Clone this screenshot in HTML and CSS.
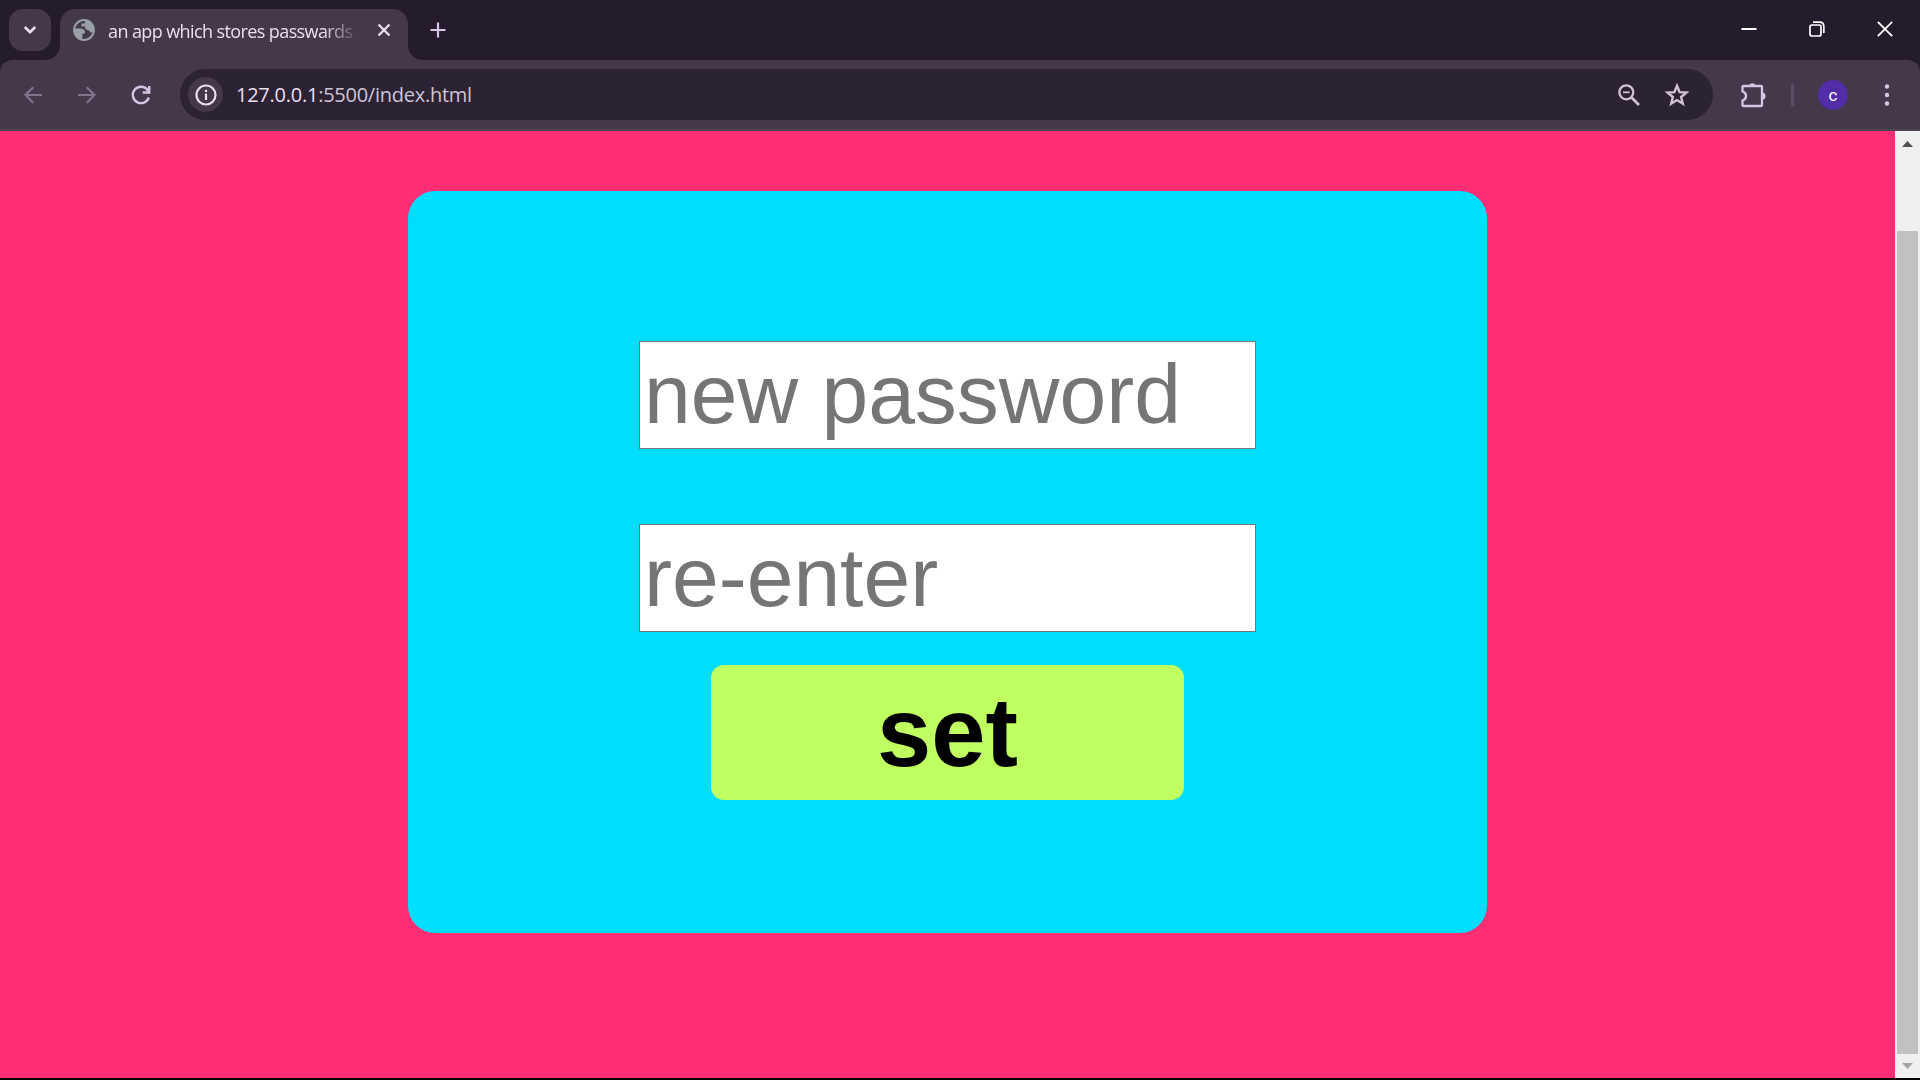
FILE: index.html
```html
<!DOCTYPE html>
<html lang="en">
<head>
<meta charset="utf-8">
<title>an app which stores passwards</title>
<link rel="stylesheet" href="styles.css">
</head>
<body>
<div class="window">
  <header class="tabstrip">
    <button class="tab-search" aria-label="Search tabs">
      <svg width="14" height="10" viewBox="0 0 14 10"><path d="M1.800 2l5.200 5.200 5.200-5.200" fill="none" stroke="#e9dff0" stroke-width="2.600"/></svg>
    </button>
    <div class="tab">
      <svg class="globe" width="22" height="22" viewBox="0 0 22 22">
        <circle cx="11" cy="11" r="9.900" fill="#43394b" stroke="#9aa0a6" stroke-width="2"/>
        <path d="M1 9.500h6.500q4 0 4.500 3.500v1.500H9.500v3.500l-1 2.500C4 20 1 16 1 9.500zM12 1.500v3H8.500v3h3.500q0 3.500 2.500 3.500t3 2.500l3.500-.5C22 6 17 1 12 1.500z" fill="#9aa0a6"/>
      </svg>
      <span class="tab-title">an app which stores passwards a</span>
      <svg class="tab-close" width="14" height="14" viewBox="0 0 14 14"><path d="M1.500 1.500l11 11m0-11l-11 11" stroke="#e9dff0" stroke-width="2.300"/></svg>
    </div>
    <svg class="new-tab" width="16" height="16" viewBox="0 0 16 16"><path d="M8 .5v15M.5 8h15" stroke="#d8c4e4" stroke-width="2.200"/></svg>
    <div class="window-controls">
      <svg width="16" height="16" viewBox="0 0 16 16"><path d="M.5 8h15" stroke="#fff" stroke-width="2"/></svg>
      <svg width="16" height="16" viewBox="0 0 16 16" fill="none" stroke="#fff" stroke-width="1.700"><rect x="1" y="4" width="11" height="11" rx="2"/><path d="M4 1.200h6.500q4.300 0 4.300 4.300V12"/></svg>
      <svg width="16" height="16" viewBox="0 0 16 16"><path d="M.8.8l14.400 14.400m0-14.400L.8 15.200" stroke="#fff" stroke-width="1.800"/></svg>
    </div>
  </header>

  <nav class="toolbar">
    <div class="nav-icons">
      <svg width="18" height="18" viewBox="0 0 18 18" fill="none" stroke="#80758a" stroke-width="2.100"><path d="M18 9H1.500M9.200 1.200L1.500 9l7.700 7.800"/></svg>
      <svg width="18" height="18" viewBox="0 0 18 18" fill="none" stroke="#80758a" stroke-width="2.100"><path d="M0 9h16.500M8.800 1.200L16.500 9l-7.700 7.800"/></svg>
      <svg width="20" height="20" viewBox="0 0 20 20"><path d="M17.800 12.500A8.200 8.200 0 1 1 16.200 4.500L18 6.500M18.200 1v6.500h-6.500" fill="none" stroke="#d8c4e4" stroke-width="2.400"/></svg>
    </div>
    <div class="omnibox">
      <span class="site-info">
        <svg width="22" height="22" viewBox="0 0 22 22"><circle cx="11" cy="11" r="9.500" fill="none" stroke="#e9dff0" stroke-width="2.200"/><path d="M11 9.500V16M11 5.800V8" stroke="#e9dff0" stroke-width="2.200"/></svg>
      </span>
      <span class="url"><span class="host">127.0.0.1</span>:5500/index.html</span>
      <svg class="zoom-icon" width="22" height="22" viewBox="0 0 22 22" fill="none" stroke="#cfc4d3"><circle cx="8.300" cy="8.300" r="7" stroke-width="2.300"/><path d="M13.300 13.300l7.700 7.700" stroke-width="2.700"/><path d="M5 8.300h6.600" stroke-width="1.800"/></svg>
      <svg class="star" width="24" height="24" viewBox="0 0 24 24"><path d="M12 2.800l2.600 6.300 6.700.5-5.200 4.400 1.700 6.700-5.800-3.600-5.800 3.600L7.900 14 2.700 9.600l6.700-.5z" fill="none" stroke="#cfc4d3" stroke-width="2.400"/></svg>
    </div>
    <svg class="puzzle" width="26" height="26" viewBox="0 0 26 26"><path d="M3.500 4h17.500q1 0 1 1v18q0 1-1 1h-17.500q-1 0-1-1v-4.500q3.500-1 3.500-4.500t-3.500-4.500V5q0-1 1-1z" fill="none" stroke="#d8c4e4" stroke-width="2.300"/><path d="M9 4a3.300 3.300 0 0 1 6.500 0zM22 10.500a3.600 3.600 0 0 1 0 7.200z" fill="#d8c4e4"/></svg>
    <span class="separator"></span>
    <span class="avatar">c</span>
    <svg class="menu" width="6" height="22" viewBox="0 0 6 22" fill="#d8c4e4"><circle cx="3" cy="2.500" r="2.200"/><circle cx="3" cy="11" r="2.200"/><circle cx="3" cy="19.500" r="2.200"/></svg>
  </nav>

  <div class="viewport">
    <main class="page">
      <form class="card">
        <input class="field" type="text" placeholder="new password">
        <input class="field" type="text" placeholder="re-enter">
        <button class="submit" type="button">set</button>
      </form>
    </main>
    <div class="scrollbar">
      <svg class="arrow-up" width="11" height="6" viewBox="0 0 11 6"><path d="M0 6L5.500 0 11 6z" fill="#505050"/></svg>
      <div class="thumb"></div>
      <svg class="arrow-down" width="11" height="6" viewBox="0 0 11 6"><path d="M0 0h11L5.500 6z" fill="#a3a3a3"/></svg>
    </div>
  </div>
</div>
</body>
</html>
```
FILE: styles.css
```css
* { box-sizing: border-box; }
body { margin: 0; overflow: hidden; background: #000; }
svg { display: block; flex: none; }
button { border: 0; padding: 0; }

.window {
  display: flex;
  flex-direction: column;
  width: 1920px;
  height: 1080px;
  background: #241b2d;
  border-bottom: 2px solid #000;
  font-family: "Open Sans", "Noto Sans", sans-serif;
}

.tabstrip {
  display: flex;
  align-items: flex-start;
  height: 60px;
  flex: none;
  padding: 9px 18px 0 9px;
}
.tab-search {
  display: flex;
  align-items: center;
  justify-content: center;
  width: 42px;
  height: 42px;
  margin-right: 9px;
  border-radius: 14px;
  background: #43394b;
}
.tab {
  position: relative;
  display: flex;
  width: 348px;
  height: 51px;
  padding: 10px 17px 0 13px;
  border-radius: 15px 15px 0 0;
  background: #43394b;
}
.tab::before,
.tab::after {
  content: "";
  position: absolute;
  bottom: 0;
  width: 15px;
  height: 15px;
}
.tab::before {
  left: -15px;
  background: radial-gradient(circle at 0 0, transparent 14.500px, #43394b 15.500px);
}
.tab::after {
  right: -15px;
  background: radial-gradient(circle at 100% 0, transparent 14.500px, #43394b 15.500px);
}
.tab-title {
  width: 258px;
  margin: 0 0 0 13px;
  white-space: nowrap;
  color: #e9dff0;
  font-size: 18px;
  line-height: 24px;
  height: 28px;
  letter-spacing: -0.600px;
  -webkit-mask-image: linear-gradient(90deg, #000 215px, transparent 252px);
  mask-image: linear-gradient(90deg, #000 215px, transparent 252px);
}
.tab-close { margin: 4px 0 0 auto; }
.new-tab { margin: 13px 0 0 22px; }
.window-controls {
  display: flex;
  gap: 52px;
  margin: 12px 0 0 auto;
  padding-right: 9px;
}

.toolbar {
  display: flex;
  align-items: center;
  height: 71px;
  flex: none;
  padding: 0 30px 0 24px;
  border-radius: 12px 12px 0 0;
  border-bottom: 2px solid #4b464f;
  background: #43394b;
}
.nav-icons {
  display: flex;
  align-items: center;
  gap: 36px;
  width: 156px;
}
.nav-icons svg:last-child { margin-left: -1px; }
.omnibox {
  display: flex;
  align-items: center;
  width: 1533px;
  height: 51px;
  padding: 0 24px 0 8px;
  border-radius: 26px;
  background: #2b2233;
}
.site-info {
  display: flex;
  align-items: center;
  justify-content: center;
  width: 35px;
  height: 35px;
  border-radius: 50%;
  background: #43394b;
}
.url {
  margin: 0 auto 0 13px;
  padding-top: 1px;
  color: #cfc4d3;
  font-size: 20px;
  line-height: 28px;
  letter-spacing: -0.250px;
}
.host { color: #e9dff0; }
.zoom-icon { margin-right: 25px; }
.puzzle { margin-left: 27px; }
.separator {
  width: 3px;
  height: 24px;
  margin-left: 25px;
  border-radius: 2px;
  background: #5a4c65;
}
.avatar {
  display: flex;
  align-items: center;
  justify-content: center;
  width: 30px;
  height: 30px;
  margin-left: 24px;
  border-radius: 50%;
  background: #512da8;
  color: #fff;
  font: 400 17px/28px Roboto, sans-serif;
}
.menu { margin-left: auto; }

.viewport { display: flex; flex: 1; min-height: 0; }
.page {
  flex: 1;
  padding-top: 60px;
  background: #ff2e75;
}
.card {
  display: flex;
  flex-direction: column;
  align-items: center;
  width: 1079px;
  height: 742px;
  margin: 0 auto;
  padding-top: 150px;
  border-radius: 27px;
  background: #00defd;
}
.field {
  width: 617px;
  height: 108px;
  margin-bottom: 75px;
  padding: 0 4px 2px;
  border: 1px solid #767676;
  border-radius: 0;
  background: #fff;
  font: 84px "Liberation Sans", Arial, sans-serif;
}
.field::placeholder { color: #757575; }
.field + .field { margin-bottom: 33px; font-kerning: none; }
.submit {
  width: 473px;
  height: 135px;
  border-radius: 13px;
  background: #bfff60;
  color: #000;
  font: bold 97.500px "Liberation Sans", Arial, sans-serif;
}

.scrollbar {
  display: flex;
  flex-direction: column;
  align-items: center;
  width: 25px;
  padding: 10px 0 9px;
  background: #f0f0f0;
}
.thumb {
  width: 21px;
  height: 823px;
  margin-top: 84px;
  background: #c1c1c1;
}
.arrow-down { margin-top: auto; }
```
